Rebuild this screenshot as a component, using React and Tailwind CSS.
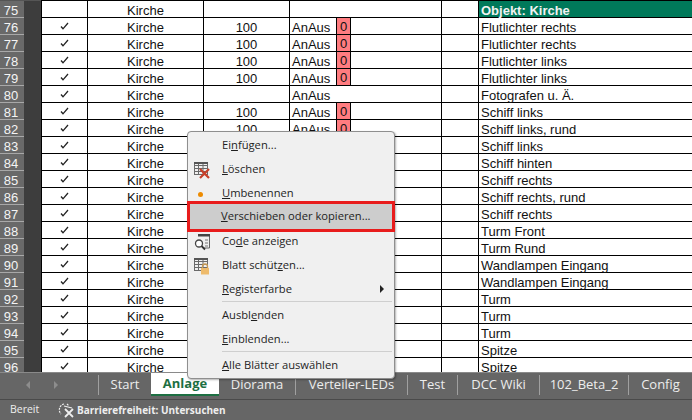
const labels = [
  "Objekt: Kirche","Flutlichter rechts","Flutlichter rechts","Flutlichter links","Flutlichter links","Fotografen u. Ä.","Schiff links","Schiff links, rund","Schiff links","Schiff hinten","Schiff rechts","Schiff rechts, rund","Schiff rechts","Turm Front","Turm Rund","Wandlampen Eingang","Wandlampen Eingang","Turm","Turm","Turm","Spitze","Spitze",
];

function Check() {
  return (
    <svg width="9" height="8" viewBox="0 0 9 8">
      <path d="M1 4.5 L3 6.8 L8 1" fill="none" stroke="#222" strokeWidth="1.3" />
    </svg>
  );
}

function Row({ n, label, i }) {
  const plain = i === 0 || i === 5;
  const covered = i > 7;
  return (
    <div className="flex h-[17px] shrink-0 text-[13px] leading-[19px] text-[#111]">
      <div className="w-[24px] shrink-0 border-b border-[#a8a8a8] bg-[#696969] pr-[2px] text-center text-[13px] text-[#f4f4f4]">{n}</div>
      <div className="w-[17px] shrink-0 bg-[#3d3d3d]" />
      <div className="flex flex-1 border-b border-black bg-white">
        <div className="flex w-[47px] shrink-0 items-center justify-center border-x border-black">{i > 0 && <Check />}</div>
        <div className="w-[116px] shrink-0 border-r border-black text-center">Kirche</div>
        <div className="w-[86px] shrink-0 border-r border-black text-center">{!plain && !covered && "100"}</div>
        <div className="flex w-[152px] shrink-0 border-r border-black pl-[2px]">
          {i > 0 && !covered && <span className="w-[44px]">AnAus</span>}
          {i > 0 && !plain && !covered && <span className="h-[16px] w-[15px] border-x border-black bg-[#ff7c80] text-center leading-[18px]">0</span>}
        </div>
        <div className="w-[37px] shrink-0 border-r border-black" />
        <div className={i === 0 ? "flex-1 bg-[#00795a] pl-[2px] font-bold text-[#f2f2f2]" : "flex-1 pl-[2px]"}>{label}</div>
      </div>
    </div>
  );
}

function Item({ children, icon, arrow }) {
  return (
    <div className="relative flex h-[24px] items-center pl-[34px] pr-[10px] text-[11.2px] text-[#1f1f1f]">
      {icon && <span className="absolute left-[5px] top-[4px] flex h-[18px] w-[18px] items-center justify-center">{icon}</span>}
      <span className="flex-1">{children}</span>
      {arrow && <span className="h-0 w-0 border-y-[4px] border-l-[4px] border-y-transparent border-l-[#222]" />}
    </div>
  );
}

const GridIcon = ({ children }) => (
  <svg width="18" height="18" viewBox="0 0 18 18">
    <g fill="none" stroke="#6a6a6a" strokeWidth="1">
      <rect x="1.5" y="1.5" width="13" height="12" />
      <path d="M1.5 4.5H14.5M1.5 7.5H14.5M1.5 10.5H14.5M5.5 1.5V13.5M10 1.5V13.5" />
    </g>
    <rect x="1" y="1" width="14" height="2" fill="#555" />
    {children}
  </svg>
);

function Menu() {
  return (
    <div className="absolute left-[187px] top-[131px] z-10 w-[208px] rounded-[4px] border border-[#8f8f8f] bg-[#f0f0f0] py-[1px] font-['Open_Sans',sans-serif] shadow-[1px_1px_2px_rgba(0,0,0,0.3)]">
      <Item>Ei<u>n</u>fügen...</Item>
      <Item icon={<GridIcon><path d="M7 8L16 17M16 8L7 17" stroke="#c8402a" strokeWidth="2.2" /></GridIcon>}><u>L</u>öschen</Item>
      <Item icon={<span className="mr-[4px] h-[5px] w-[5px] rounded-full bg-[#ed8b00]" />}><u>U</u>mbenennen</Item>
      <div className="relative -mx-px -mb-[3px] -mt-[4px] h-[31px] border-[3px] border-[#e81c1c] bg-[#cdcdcd] pl-[31px] text-[11.2px] leading-[24px] text-[#1f1f1f]">
        <u>V</u>erschieben oder kopieren...
      </div>
      <Item icon={
        <svg width="18" height="18" viewBox="0 0 18 18">
          <path d="M5 1.5H16.5V15H10" fill="none" stroke="#666" />
          <rect x="5" y="1" width="12" height="2.5" fill="#444" />
          <path d="M12 7H15M12 10H15M12 13H15" stroke="#777" />
          <circle cx="6" cy="10.5" r="3.5" fill="#fff" stroke="#444" strokeWidth="1.3" />
          <path d="M8.5 13L12 16.5" stroke="#333" strokeWidth="1.8" />
        </svg>
      }>Co<u>d</u>e anzeigen</Item>
      <Item icon={
        <GridIcon>
          <path d="M9.5 11V9.5a2.5 2.5 0 0 1 5 0V11" fill="none" stroke="#c79a55" strokeWidth="1.3" />
          <rect x="8" y="11" width="8" height="6.5" fill="#eebb6c" />
        </GridIcon>
      }>Blatt schüt<u>z</u>en...</Item>
      <Item arrow><u>R</u>egisterfarbe</Item>
      <div className="ml-[34px] mr-[2px] mb-[1px] border-t border-[#cfcfcf]" />
      <Item>Ausbl<u>e</u>nden</Item>
      <Item><u>E</u>inblenden...</Item>
      <div className="ml-[34px] mr-[2px] mb-[1px] border-t border-[#cfcfcf]" />
      <Item><u>A</u>lle Blätter auswählen</Item>
    </div>
  );
}

function Sep() {
  return <span className="h-[20px] w-px shrink-0 bg-[#a0a0a0]" />;
}

function Tab({ children, w }) {
  return <span className="flex h-full shrink-0 items-center justify-center" style={{ width: w }}>{children}</span>;
}

export default function App() {
  return (
    <div className="relative flex h-[420px] w-[692px] flex-col overflow-hidden bg-[#666] font-['Liberation_Sans',sans-serif]">
      <div className="flex h-[372px] shrink-0 flex-col overflow-hidden">
        <div className="flex h-px shrink-0">
          <div className="w-[41px] bg-[#555]" />
          <div className="flex-1 bg-black" />
        </div>
        {labels.map((label, i) => <Row key={i} n={75 + i} label={label} i={i} />)}
      </div>
      <div className="flex h-[27px] shrink-0 border-t border-[#8a8a8a] font-['Open_Sans',sans-serif] text-[13px] text-[#ededed]">
        <div className="flex h-[23px] w-[98px] shrink-0 items-center pl-[26px]">
          <span className="h-0 w-0 border-y-[4px] border-r-[4px] border-y-transparent border-r-[#8d8d8d]" />
          <span className="ml-[24px] h-0 w-0 border-y-[4px] border-l-[4px] border-y-transparent border-l-[#8d8d8d]" />
        </div>
        <div className="flex h-[23px] items-center">
          <Sep />
          <Tab w={52}>Start</Tab>
          <span className="flex h-[23px] w-[68px] shrink-0 items-center justify-center border-b-2 border-[#1d6f42] bg-white font-bold text-[#1d6f42]">Anlage</span>
          <Tab w={76}>Diorama</Tab>
          <Sep />
          <Tab w={111}>Verteiler-LEDs</Tab>
          <Sep />
          <Tab w={49}>Test</Tab>
          <Sep />
          <Tab w={81}>DCC Wiki</Tab>
          <Sep />
          <Tab w={88}>102_Beta_2</Tab>
          <Sep />
          <Tab w={63}>Config</Tab>
        </div>
      </div>
      <div className="flex h-[21px] shrink-0 items-center border-t border-[#4a4a4a] pl-[10px] font-['Open_Sans',sans-serif] text-[10.5px] text-[#eee]">
        <span className="w-[48px]">Bereit</span>
        <svg width="18" height="16" viewBox="0 0 18 16" className="mr-[1px] shrink-0">
          <path d="M6 2A6 6 0 0 0 3 12M9 2L11 4" fill="none" stroke="#eee" strokeDasharray="2 1" strokeWidth="1.2" />
          <path d="M7 7L15 15M15 7L7 15" stroke="#eee" strokeWidth="1.8" />
          <path d="M6 4L14 6" stroke="#eee" strokeWidth="1.2" />
        </svg>
        <span className="text-[10px] font-bold">Barrierefreiheit: Untersuchen</span>
      </div>
      <Menu />
    </div>
  );
}
